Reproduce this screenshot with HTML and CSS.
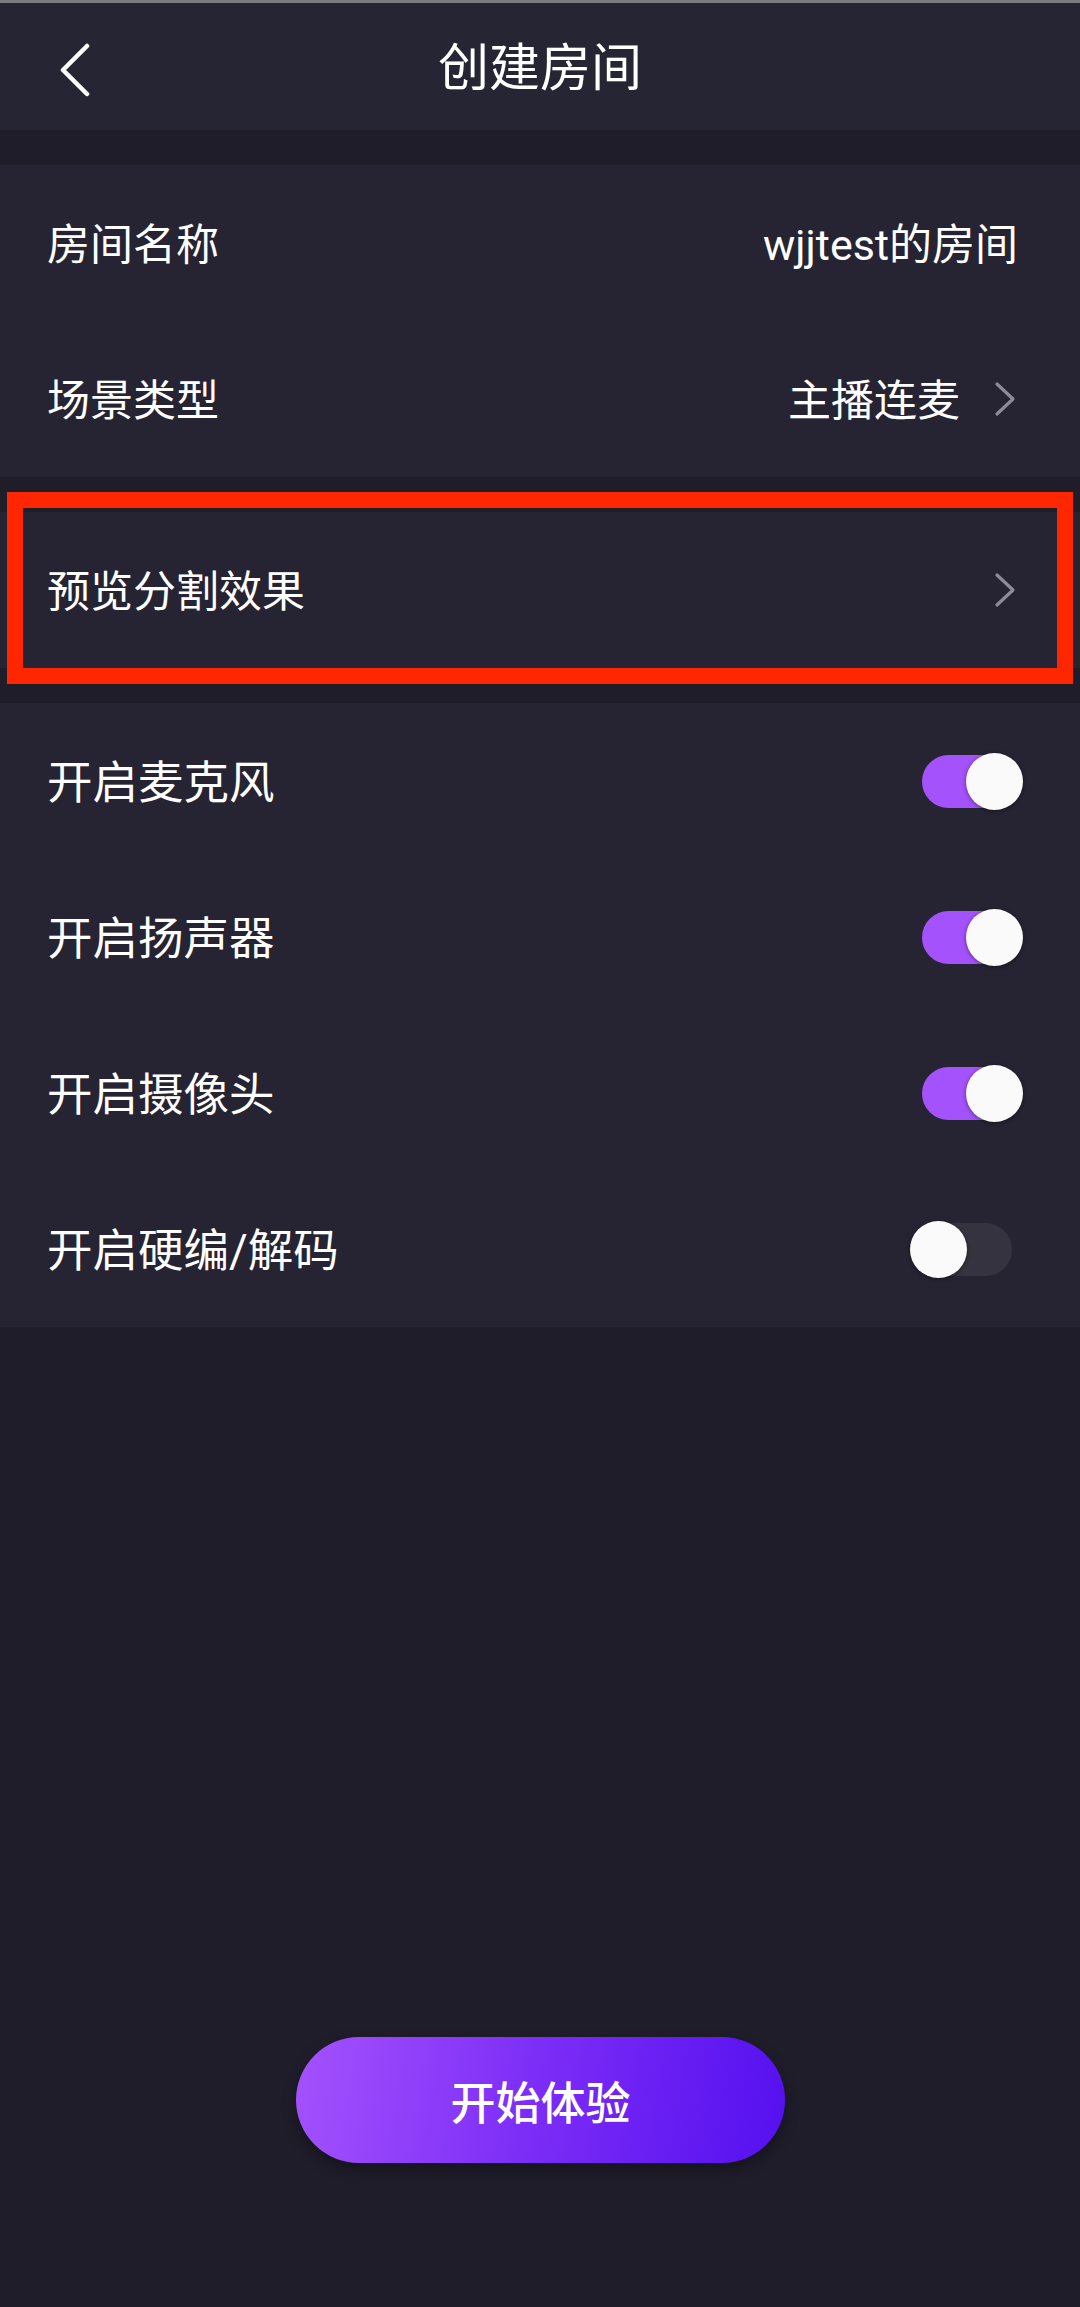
FILE: index.html
```html
<!DOCTYPE html>
<html lang="zh">
<head>
<meta charset="utf-8">
<title>创建房间</title>
<link rel="stylesheet" href="styles.css">
</head>
<body>
<div class="page">
  <div class="topline"></div>
  <header class="header">
    <div class="back">
      <svg width="32" height="54" viewBox="0 0 32 54"><path d="M28 3 L4 27 L28 51" fill="none" stroke="#ffffff" stroke-width="4.5" stroke-linecap="round" stroke-linejoin="round"/></svg>
    </div>
    <div class="title">创建房间</div>
    <div></div>
  </header>

  <section class="section">
    <div class="row">
      <span class="label">房间名称</span>
      <span class="value">wjjtest的房间</span>
    </div>
    <div class="row row-chev">
      <span class="label">场景类型</span>
      <span class="value-wrap"><span class="value">主播连麦</span>
        <svg class="chev" width="24" height="36" viewBox="0 0 24 36"><path d="M4 3 L20 18 L4 33" fill="none" stroke="#8c8b97" stroke-width="3.2" stroke-linecap="round" stroke-linejoin="round"/></svg>
      </span>
    </div>
  </section>

  <section class="section">
    <div class="row row-chev">
      <span class="label">预览分割效果</span>
      <svg class="chev" width="24" height="36" viewBox="0 0 24 36"><path d="M4 3 L20 18 L4 33" fill="none" stroke="#8c8b97" stroke-width="3.2" stroke-linecap="round" stroke-linejoin="round"/></svg>
    </div>
    <div class="redbox"></div>
  </section>

  <section class="section">
    <div class="row row-toggle">
      <span class="label label-lg">开启麦克风</span>
      <span class="switch on"><span class="track"></span><span class="thumb"></span></span>
    </div>
    <div class="row row-toggle">
      <span class="label label-lg">开启扬声器</span>
      <span class="switch on"><span class="track"></span><span class="thumb"></span></span>
    </div>
    <div class="row row-toggle">
      <span class="label label-lg">开启摄像头</span>
      <span class="switch on"><span class="track"></span><span class="thumb"></span></span>
    </div>
    <div class="row row-toggle">
      <span class="label label-lg">开启硬编/解码</span>
      <span class="switch"><span class="track"></span><span class="thumb"></span></span>
    </div>
  </section>

  <div class="btn-wrap">
    <button class="start">开始体验</button>
  </div>
</div>
</body>
</html>
```

FILE: styles.css
```css
* { box-sizing: border-box; }
html, body { margin: 0; padding: 0; }
body {
  background: #1f1d2a;
  font-family: Roboto, "Noto Sans CJK SC", "Noto Sans", sans-serif;
  color: #ffffff;
}
.page {
  width: 1080px;
  min-height: 2307px;
  display: flex;
  flex-direction: column;
}
.topline {
  height: 3px;
  background: #7a7a7c;
}
.header {
  height: 127px;
  background: #262533;
  display: grid;
  grid-template-columns: 1fr auto 1fr;
  align-items: center;
  margin-bottom: 35px;
}
.back {
  padding-left: 59px;
  display: flex;
  align-items: center;
  padding-top: 6px;
}
.title {
  font-size: 51px;
  line-height: 1;
  color: #ffffff;
  padding-top: 3px;
}
.section {
  background: #262433;
  position: relative;
  margin-bottom: 35px;
}
.row {
  height: 156px;
  display: flex;
  align-items: center;
  justify-content: space-between;
  padding: 0 62px 0 47px;
}
.row-chev { padding-right: 63px; }
.row-toggle { padding-right: 57px; }
.label {
  font-size: 43px;
  line-height: 1;
  padding-top: 5px;
}
.label-lg {
  font-size: 45.5px;
}
.value {
  font-size: 43px;
  line-height: 1;
  padding-top: 5px;
}
.value-wrap {
  display: flex;
  align-items: center;
  gap: 33px;
}
.chev { display: block; }

.redbox {
  position: absolute;
  left: 7px;
  right: 7px;
  top: -20px;
  bottom: -16px;
  border: 16px solid #ff2600;
  pointer-events: none;
}

.switch {
  position: relative;
  width: 113px;
  height: 57px;
  display: block;
}
.switch .track {
  position: absolute;
  left: 12px;
  top: 2px;
  width: 90px;
  height: 53px;
  border-radius: 27px;
  background: #35333f;
}
.switch.on .track { background: #a452fb; }
.switch .thumb {
  position: absolute;
  left: 0;
  top: 0;
  width: 57px;
  height: 57px;
  border-radius: 50%;
  background: #fafafa;
  box-shadow: 0 1px 4px rgba(0,0,0,0.45);
}
.switch.on .thumb { left: 56px; }

.btn-wrap {
  margin-top: auto;
  margin-bottom: 144px;
  display: flex;
  justify-content: center;
  padding-left: 1px;
}
.start {
  width: 489px;
  height: 126px;
  border: none;
  border-radius: 63px;
  background: linear-gradient(100deg, #a452fd 0%, #7b2cf6 50%, #5410ef 100%);
  color: #ffffff;
  font-family: Roboto, "Noto Sans CJK SC", "Noto Sans", sans-serif;
  font-size: 45px;
  font-weight: 500;
  box-shadow: 0 6px 14px rgba(0,0,0,0.35);
  padding: 0;
}
```
